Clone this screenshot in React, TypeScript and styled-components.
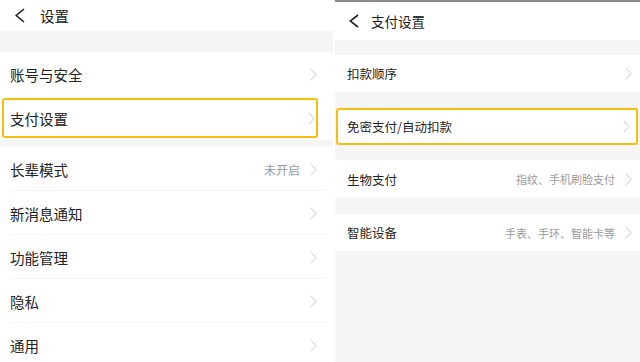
import React from 'react';
import styled, { createGlobalStyle } from 'styled-components';

const GlobalStyle = createGlobalStyle`
  html, body {
    margin: 0;
    padding: 0;
    background: #ffffff;
  }
  body {
    font-family: "Noto Sans CJK SC", "Noto Sans", sans-serif;
    color: #222222;
  }
`;

const Screen = styled.div`
  display: flex;
  width: 640px;
  height: 362px;
  overflow: hidden;
  background: #ffffff;
`;

const Panel = styled.div<{ $width?: number; $bg?: string }>`
  display: flex;
  flex-direction: column;
  width: ${({ $width }) => ($width ? `${$width}px` : 'auto')};
  flex: ${({ $width }) => ($width ? 'none' : '1')};
  background: ${({ $bg }) => $bg || '#ffffff'};
  overflow: hidden;
`;

const Gap = styled.div`
  width: 2px;
  flex: none;
  background: #ffffff;
`;

const TopLine = styled.div`
  height: 2px;
  background: #8a8a8a;
  flex: none;
`;

const Header = styled.div<{ $h: number; $size: number; $pad: number; $gap: number }>`
  display: flex;
  align-items: center;
  height: ${({ $h }) => $h}px;
  padding-left: ${({ $pad }) => $pad}px;
  gap: ${({ $gap }) => $gap}px;
  background: #ffffff;
  font-size: ${({ $size }) => $size}px;
  color: #1a1a1a;
  flex: none;
`;

const Band = styled.div<{ $h: number }>`
  height: ${({ $h }) => $h}px;
  background: #f5f5f5;
  flex: none;
`;

const List = styled.div`
  display: flex;
  flex-direction: column;
  background: #ffffff;
`;

const Row = styled.div<{
  $h: number;
  $size: number;
  $padL: number;
  $padR: number;
  $active?: boolean;
  $divider?: boolean;
}>`
  position: relative;
  display: flex;
  align-items: center;
  box-sizing: border-box;
  height: ${({ $h }) => $h}px;
  padding: 0 ${({ $padR }) => $padR}px 0 ${({ $padL }) => $padL}px;
  font-size: ${({ $size }) => $size}px;
  color: #222222;
  background: #ffffff;
  border: ${({ $active }) => ($active ? '2px solid #fbbd0f' : 'none')};
  border-radius: ${({ $active }) => ($active ? '3px' : '0')};
  flex: none;

  ${({ $divider }) =>
    $divider &&
    `
    &::after {
      content: '';
      position: absolute;
      left: 10px;
      right: 6px;
      bottom: 0;
      height: 1px;
      background: #f4f4f4;
    }
  `}
`;

const Label = styled.span`
  flex: 1;
  white-space: nowrap;
`;

const Hint = styled.span<{ $size: number }>`
  font-size: ${({ $size }) => $size}px;
  color: #9a9a9a;
  margin-right: 10px;
  white-space: nowrap;
`;

const Chevron = () => (
  <svg width="7" height="13" viewBox="0 0 7 13">
    <polyline points="0.8,0.8 6,6.5 0.8,12.2" fill="none" stroke="#c8c8c8" strokeWidth="1" />
  </svg>
);

const Back = ({ w, h }: { w: number; h: number }) => (
  <svg width={w} height={h} viewBox={`0 0 ${w} ${h}`}>
    <polyline
      points={`${w - 1},1 1.2,${h / 2} ${w - 1},${h - 1}`}
      fill="none"
      stroke="#222"
      strokeWidth="1.6"
    />
  </svg>
);

const leftRows = ['长辈模式', '新消息通知', '功能管理', '隐私', '通用'];

const App: React.FC = () => {
  return (
    <>
      <GlobalStyle />
      <Screen>
        <Panel $width={333}>
          <Header $h={31} $size={14.5} $pad={15} $gap={15}>
            <Back w={10} h={15} />
            <span>设置</span>
          </Header>
          <Band $h={21} />
          <List>
            <Row $h={44} $size={14.5} $padL={10} $padR={16}>
              <Label>账号与安全</Label>
              <Chevron />
            </Row>
            <Row
              $h={40}
              $size={14.5}
              $padL={6}
              $padR={1}
              $active
              style={{ margin: '2px 15px 2px 2px' }}
            >
              <Label>支付设置</Label>
              <Chevron />
            </Row>
          </List>
          <Band $h={7} />
          <List>
            {leftRows.map((label, i) => (
              <Row key={label} $h={44} $size={14.5} $padL={10} $padR={16} $divider={i < leftRows.length - 1}>
                <Label>{label}</Label>
                {label === '长辈模式' && <Hint $size={12}>未开启</Hint>}
                <Chevron />
              </Row>
            ))}
          </List>
        </Panel>
        <Gap />
        <Panel $bg="#f5f5f5">
          <TopLine />
          <Header $h={38} $size={13.5} $pad={14} $gap={12}>
            <Back w={10} h={14} />
            <span>支付设置</span>
          </Header>
          <Band $h={15} />
          <Row $h={37} $size={12.5} $padL={12} $padR={8}>
            <Label>扣款顺序</Label>
            <Chevron />
          </Row>
          <Band $h={16} />
          <Row
            $h={37}
            $size={12.5}
            $padL={9}
            $padR={6}
            $active
            style={{ margin: '0 2px 0 1px' }}
          >
            <Label>免密支付/自动扣款</Label>
            <Chevron />
          </Row>
          <Band $h={15} />
          <Row $h={38} $size={12.5} $padL={12} $padR={8}>
            <Label>生物支付</Label>
            <Hint $size={11}>指纹、手机刷脸支付</Hint>
            <Chevron />
          </Row>
          <Band $h={16} />
          <Row $h={37} $size={12.5} $padL={12} $padR={8}>
            <Label>智能设备</Label>
            <Hint $size={11}>手表、手环、智能卡等</Hint>
            <Chevron />
          </Row>
        </Panel>
      </Screen>
    </>
  );
};

export default App;
